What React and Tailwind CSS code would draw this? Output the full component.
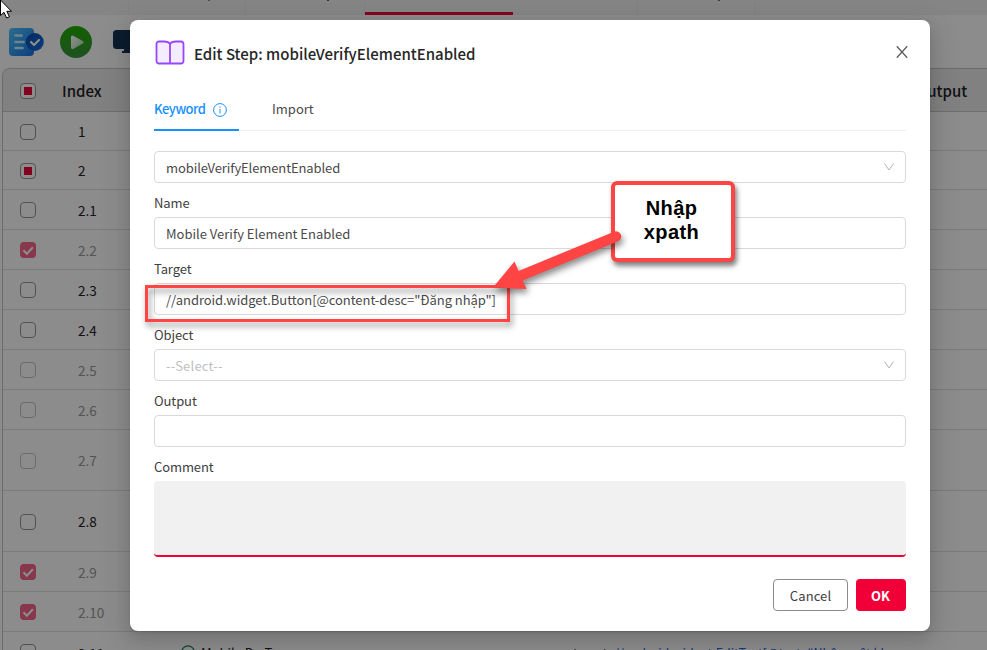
import React from "react";

const rows = [
  { n: "1", h: "h-[39px]", s: "off", odd: true },
  { n: "2", h: "h-[39px]", s: "some", odd: true },
  { n: "2.1", h: "h-10", s: "off" },
  { n: "2.2", h: "h-10", s: "on", dim: true },
  { n: "2.3", h: "h-10", s: "off" },
  { n: "2.4", h: "h-10", s: "off" },
  { n: "2.5", h: "h-10", s: "off", dim: true },
  { n: "2.6", h: "h-10", s: "off", dim: true },
  { n: "2.7", h: "h-[61px]", s: "off", dim: true, odd: true },
  { n: "2.8", h: "h-[61px]", s: "off", odd: true },
  { n: "2.9", h: "h-10", s: "on", dim: true },
  { n: "2.10", h: "h-10", s: "on", dim: true },
  { n: "2.11", h: "h-10", s: "off", last: true },
];

function Check({ state, dim }) {
  if (state === "on")
    return (
      <span className="flex size-4 shrink-0 items-center justify-center rounded bg-[#f7678a]">
        <svg viewBox="0 0 16 16" className="size-4">
          <path d="M3.4 8.2l3.5 3.5 6-6.5" fill="none" stroke="#fff" strokeWidth="2" />
        </svg>
      </span>
    );
  return (
    <span className={"flex size-4 shrink-0 items-center justify-center rounded border " + (dim ? "border-[#c4c4c4]" : "border-[#969696]") + (state === "some" ? " bg-white" : "")}>
      {state === "some" && <span className="size-2 bg-[#f00037]" />}
    </span>
  );
}

function Tabs() {
  return (
    <div className="flex h-[15px] shrink-0 bg-[#f2f2f2]">
      <div className="w-[129px] border-r border-[#ececec]" />
      <div className="w-[117px] border-r border-[#e9e9e9] pl-[79px]"><div className="h-px w-0.5 bg-[#b98a3a]" /></div>
      <div className="w-[119px] border-r border-[#e9e9e9] pl-[81px]"><div className="h-px w-0.5 bg-[#555577]" /></div>
      <div className="flex w-[148px] items-end"><div className="h-[3px] w-full bg-[#f00037]" /></div>
      <div className="w-[125px] border-r border-[#e9e9e9]" />
      <div className="w-[118px] border-r border-[#e9e9e9] pl-[80px]"><div className="h-px w-0.5 bg-[#a0673a]" /></div>
    </div>
  );
}

function Toolbar() {
  return (
    <div className="flex h-[53px] shrink-0 items-center pl-2">
      <svg viewBox="0 0 36 28" className="h-7 w-9">
        <defs>
          <linearGradient id="doc" x1="0" y1="0" x2="1" y2="1">
            <stop offset="0" stopColor="#50c8ff" />
            <stop offset="1" stopColor="#1673ea" />
          </linearGradient>
          <linearGradient id="badge" x1="0" y1="0" x2="1" y2="1">
            <stop offset="0" stopColor="#0a4aa8" />
            <stop offset="1" stopColor="#1670e8" />
          </linearGradient>
        </defs>
        <rect x="1" y="0" width="25" height="28" rx="4" fill="url(#doc)" />
        <path d="M7.5 7.5h6M7.5 14h8M7.5 20h7" stroke="#c8f0ff" strokeWidth="2.6" strokeLinecap="round" />
        <circle cx="26.8" cy="14" r="9" fill="url(#badge)" />
        <path d="M23 14l3 3 5-5" fill="none" stroke="#fff" strokeWidth="2.2" strokeLinecap="round" strokeLinejoin="round" />
      </svg>
      <svg viewBox="0 0 32 32" className="ml-4 size-8">
        <defs>
          <linearGradient id="run" x1="0" y1="0" x2="0" y2="1">
            <stop offset="0" stopColor="#20b000" />
            <stop offset="1" stopColor="#3a9440" />
          </linearGradient>
          <linearGradient id="tri" x1="0" y1="0" x2="1" y2="1">
            <stop offset="0" stopColor="#fff" />
            <stop offset="1" stopColor="#b7dfb4" />
          </linearGradient>
        </defs>
        <circle cx="16" cy="16" r="16" fill="url(#run)" />
        <path d="M12.5 11v10.6l9.5-5.3z" fill="url(#tri)" stroke="url(#tri)" strokeWidth="3" strokeLinejoin="round" />
      </svg>
      <svg viewBox="0 0 30 26" className="ml-[21px] h-[26px] w-[30px]">
        <rect x="0" y="1" width="30" height="19" rx="3.5" fill="#173452" />
        <path d="M11 19h6v4h-6zM9 22h12v2H9z" fill="#173452" />
      </svg>
    </div>
  );
}

function Page() {
  return (
    <div className="flex h-[650px] flex-col overflow-hidden bg-white">
      <Tabs />
      <Toolbar />
      <div className="ml-[2px] flex-1 overflow-hidden rounded-tl-lg border-t border-l border-[#c4c4c4]">
        <div className="flex h-[43px] items-center border-b border-[#c9c9c9] bg-[#ebebeb] pl-[17px] text-[15px] font-medium text-[#222]">
          <div className="pt-0.5"><Check state="some" /></div>
          <span className="ml-[26px] w-[854px] pt-0.5">Index</span>
          <span className="pt-0.5">Output</span>
        </div>
        {rows.map((r) => (
          <div key={r.n} className={"flex items-center border-b border-[#e0e0e0] pl-[17px] text-[13.5px] " + r.h + (r.dim ? " text-[#999]" : " text-[#222]")}>
            <div className={r.odd ? "pt-px" : ""}><Check state={r.s} dim={r.dim} /></div>
            <span className={"ml-[42px] w-[103px] " + (r.last ? "pt-1" : "pt-px")}>{r.n}</span>
            {r.last && (
              <>
                <svg viewBox="0 0 14 14" className="size-3.5">
                  <circle cx="7" cy="7" r="6.2" fill="none" stroke="#188a5a" strokeWidth="1.3" />
                  <path d="M4 7l2 2 4-4" fill="none" stroke="#188a5a" />
                </svg>
                <span className="ml-[6px] w-[372px] pt-[3px] text-[13px]">Mobile Do Tap</span>
                <span className="pt-[3px] text-[12.5px] whitespace-nowrap">target: <span className="text-[#2867d8]">//android.widget.EditText[@text="Nhập mật kh</span></span>
              </>
            )}
          </div>
        ))}
      </div>
    </div>
  );
}

function Chevron() {
  return (
    <svg viewBox="0 0 12 12" className="ml-auto size-3">
      <path d="M1.5 2.5l4.5 6.5 4.5-6.5" fill="none" stroke="#b5b5b5" />
    </svg>
  );
}

function Box({ children, select }) {
  return (
    <div className="flex h-8 items-center rounded border border-[#d9d9d9] pr-[10px] pl-[11px] text-[13px] text-[#4a4a4a]">
      <span className="pt-0.5">{children}</span>
      {select && <Chevron />}
    </div>
  );
}

function Label({ children }) {
  return <div className="flex h-[34px] items-center pt-[6px] text-[13px] tracking-[-0.1px] text-[#404040]">{children}</div>;
}

function Modal() {
  return (
    <div className="absolute top-5 left-[130px] flex h-[611px] w-[800px] flex-col rounded-lg bg-white px-6 shadow-[0_6px_16px_0_rgba(0,0,0,0.12),0_3px_6px_-4px_rgba(0,0,0,0.16),0_9px_28px_8px_rgba(0,0,0,0.08)]">
      <div className="flex h-[66px] items-center">
        <svg viewBox="0 0 32 26" className="h-[26px] w-8">
          <path d="M16 4C15 2 12 1.5 10 1.5H5A2.500 2.500 0 0 0 2.500 4v17A2.500 2.500 0 0 0 5 23.500h22a2.500 2.500 0 0 0 2.500-2.500V4A2.500 2.500 0 0 0 27 1.500h-5c-2 0-5 .5-6 2.500zM16 3.500v20" fill="#f4ecff" stroke="#9747ff" strokeWidth="1.8" />
        </svg>
        <span className="ml-2 pt-0.5 text-[15px] font-medium whitespace-nowrap text-[#262626]">Edit Step: mobileVerifyElementEnabled</span>
        <svg viewBox="0 0 12 12" className="mt-[-2px] mr-[-2px] ml-auto size-3">
          <path d="M.8.3l10.4 11.4M11.2.3L.8 11.7" stroke="#555" strokeWidth="1.3" />
        </svg>
      </div>
      <div className="flex h-[45px] border-b border-[#f0f0f0] text-[13px]">
        <div className="-mb-px flex w-[85px] items-center border-b-2 border-[#1890ff] pt-[3px] font-medium tracking-[-0.5px] text-[#1890ff]">
          <span className="w-[59px]">Keyword</span>
          <svg viewBox="0 0 14 14" className="mt-0.5 size-3.5">
            <circle cx="7" cy="7" r="6.4" fill="none" stroke="#1890ff" />
            <path d="M7 6v4.5M7 3.5v1.3" stroke="#1890ff" />
          </svg>
        </div>
        <div className="ml-[33px] flex items-center pt-0.5 text-[#4a4a4a]">Import</div>
      </div>
      <div className="pt-5">
        <Box select><span className="tracking-[-0.1px]">mobileVerifyElementEnabled</span></Box>
        <Label>Name</Label>
        <Box>Mobile Verify Element Enabled</Box>
        <Label>Target</Label>
        <Box><span className="tracking-[-0.05px]">//android.widget.Button[@content-desc="Đăng nhập"]</span></Box>
        <Label>Object</Label>
        <Box select><span className="tracking-[0.2px] text-[#bfbfbf]">--Select--</span></Box>
        <Label>Output</Label>
        <Box />
        <Label>Comment</Label>
        <div className="h-[76px] rounded border-b-2 border-[#f00037] bg-[#f1f1f1]" />
      </div>
      <div className="mt-[22px] flex h-8 justify-end gap-2 text-[13px]">
        <button className="w-[75px] rounded border border-[#8c8c8c] pt-0.5 tracking-[0.1px] text-[#404040]">Cancel</button>
        <button className="w-[50px] rounded bg-[#f00037] pt-0.5 pr-px font-bold text-white">OK</button>
      </div>
    </div>
  );
}

function Annotation() {
  return (
    <>
      <div className="absolute top-[285px] left-[145px] h-[37px] w-[365px] border-3 border-[#ff4444] [filter:drop-shadow(2px_4px_3px_rgba(0,0,0,0.45))]" />
      <div className="absolute top-[181px] left-[611px] flex h-[81px] w-[124px] flex-col items-center rounded-md border-4 border-[#ff4444] bg-white pt-[11px] pr-[3px] text-center font-['Liberation_Sans',Arial,sans-serif] text-xl leading-6 font-bold tracking-[0.4px] text-black shadow-[2px_4px_5px_rgba(0,0,0,0.5)]">
        <span>Nhập</span>
        <span>xpath</span>
      </div>
      <svg viewBox="0 0 150 80" className="absolute top-[225px] left-[485px] h-20 w-[150px] [filter:drop-shadow(2px_4px_3px_rgba(0,0,0,0.45))]">
        <path d="M35 51L131 11.5" stroke="#ff4444" strokeWidth="10.5" strokeLinecap="round" />
        <path d="M8 62.5L29.5 36.5 41.5 64z" fill="#ff4444" />
      </svg>
    </>
  );
}

export default function App() {
  return (
    <div className="relative h-[650px] w-[987px] overflow-hidden font-['Noto_Sans_CJK_SC','Noto_Sans',sans-serif]">
      <Page />
      <div className="absolute inset-0 bg-black/45" />
      <Modal />
      <Annotation />
      <svg viewBox="0 0 14 20" className="absolute top-0 left-0 h-5 w-3.5">
        <path d="M.5 0v15.5l3.5-3.2 2.6 5.7 2.8-1.2-2.6-5.5h4.7z" fill="#fff" stroke="#000" strokeWidth="1" />
      </svg>
    </div>
  );
}
